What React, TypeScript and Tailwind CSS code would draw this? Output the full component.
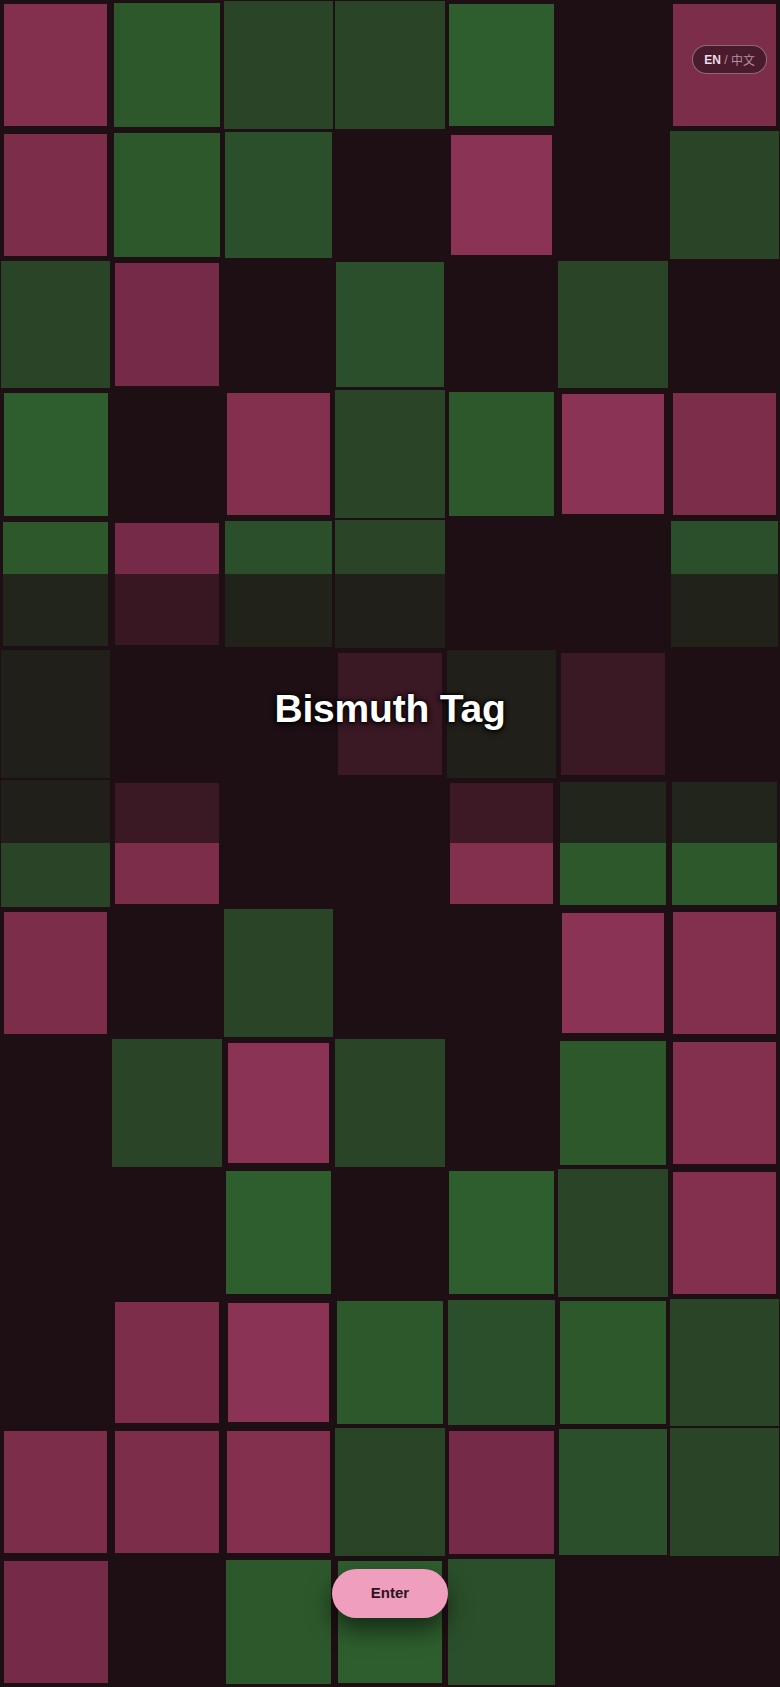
import React from 'react';

type TTile = 'P1' | 'P2' | 'P3' | 'P4' | 'G1' | 'G2' | 'G3' | 'G4' | 'E';

const tileStyles: Record<TTile, { pad: string; fill: string }> = {
    P1: { pad: 'p-[5px]', fill: 'bg-[#8a3354]' },
    P2: { pad: 'p-[4px]', fill: 'bg-[#83304f]' },
    P3: { pad: 'p-[4px]', fill: 'bg-[#7c2d4a]' },
    P4: { pad: 'p-[3.5px]', fill: 'bg-[#752a47]' },
    G1: { pad: 'p-[3.5px]', fill: 'bg-[#2e5e2e]' },
    G2: { pad: 'p-[3px]', fill: 'bg-[#2d582c]' },
    G3: { pad: 'p-[2px]', fill: 'bg-[#2b4f2a]' },
    G4: { pad: 'p-[1px]', fill: 'bg-[#294427]' },
    E: { pad: 'p-0', fill: 'bg-transparent' },
};

// 7 x 13 board, row by row
const board: TTile[][] = [
    ['P2', 'G2', 'G4', 'G4', 'G1', 'E', 'P3'],
    ['P3', 'G2', 'G3', 'E', 'P1', 'E', 'G4'],
    ['G4', 'P4', 'E', 'G3', 'E', 'G4', 'E'],
    ['G1', 'E', 'P2', 'G4', 'G2', 'P1', 'P3'],
    ['G2', 'P4', 'G3', 'G4', 'E', 'E', 'G3'],
    ['G4', 'E', 'E', 'P3', 'G4', 'P3', 'E'],
    ['G4', 'P3', 'E', 'E', 'P2', 'G2', 'G2'],
    ['P3', 'E', 'G4', 'E', 'E', 'P1', 'P2'],
    ['E', 'G4', 'P1', 'G4', 'E', 'G2', 'P2'],
    ['E', 'E', 'G1', 'E', 'G1', 'G4', 'P2'],
    ['E', 'P3', 'P1', 'G2', 'G3', 'G2', 'G4'],
    ['P3', 'P3', 'P2', 'G4', 'P4', 'G3', 'G4'],
    ['P4', 'E', 'G2', 'G1', 'G3', 'E', 'E'],
];

function Tile({ kind }: { kind: TTile }) {
    const s = tileStyles[kind];
    return (
        <div className={`min-h-0 min-w-0 ${s.pad}`}>
            <div className={`h-full w-full ${s.fill}`} />
        </div>
    );
}

export default function App() {
    return (
        <div className="relative h-screen w-full overflow-hidden bg-[#1e0f14] font-['Liberation_Sans',Arial,sans-serif]">
            <div className="grid h-full grid-cols-7 grid-rows-[repeat(13,minmax(0,1fr))]">
                {board.map((row, r) => row.map((kind, c) => <Tile key={`${r}-${c}`} kind={kind} />))}
            </div>

            {/* dimmed band behind the title */}
            <div className="absolute inset-x-0 top-[574px] flex h-[269px] items-center justify-center bg-[#1e0f14]/70">
                <h1 className="text-[39px] font-bold leading-none tracking-[-0.2px] text-white [text-shadow:0_0_2px_#000,0_0_4px_#000,0_2px_6px_rgba(0,0,0,0.8)]">
                    Bismuth Tag
                </h1>
            </div>

            <button className="absolute right-[13px] top-[45px] flex h-[29px] items-center rounded-full border border-white/35 bg-black/40 px-[11px] text-[12px] leading-none">
                <span className="font-semibold text-[#ecdce2]">EN</span>
                <span className="text-[#b98e9e]">&nbsp;/&nbsp;</span>
                <span className="font-['Noto_Sans_CJK_SC',sans-serif] text-[#b98e9e]">中文</span>
            </button>

            <button className="absolute bottom-[69px] left-1/2 flex h-[49px] w-[116px] -translate-x-1/2 items-center justify-center rounded-full bg-[#ef9fbd] text-[15px] font-bold text-[#2a1420] shadow-[0_12px_24px_rgba(0,0,0,0.55)]">
                Enter
            </button>
        </div>
    );
}
